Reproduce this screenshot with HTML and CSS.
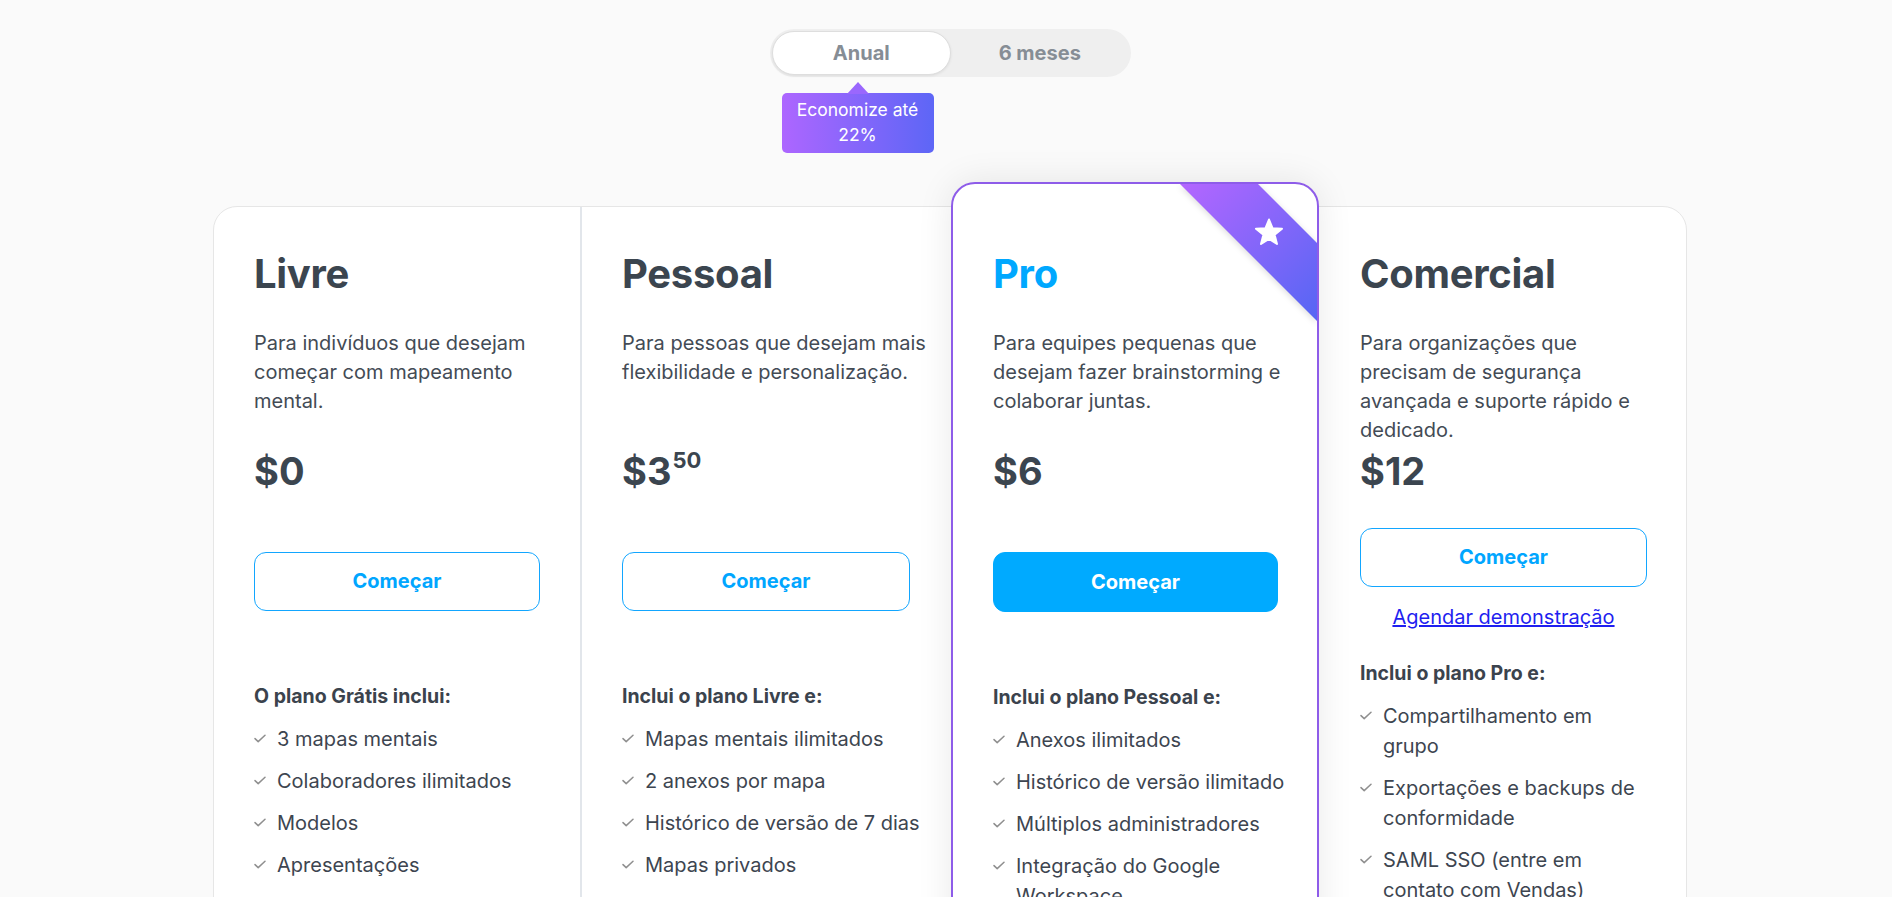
FILE: index.html
```html
<!DOCTYPE html>
<html lang="pt-BR">
<head>
<meta charset="utf-8">
<title>Planos</title>
<link rel="stylesheet" href="styles.css">
</head>
<body>
<div class="page">
  <div class="switch">
    <div class="toggle">
      <div class="opt opt-active">Anual</div>
      <div class="opt">6 meses</div>
    </div>
    <div class="tip">Economize até 22%</div>
  </div>

  <div class="plans">
    <section class="plan plan-free">
      <h2 class="plan-title">Livre</h2>
      <p class="plan-desc">Para indivíduos que desejam<br>começar com mapeamento<br>mental.</p>
      <div class="price-block"><div class="price">$0</div></div>
      <a class="btn">Começar</a>
      <div class="features">
        <h3 class="feat-head">O plano Grátis inclui:</h3>
        <ul class="feat-list">
          <li><svg class="chk" viewBox="0 0 12 9"><path d="M1 4.6 4.2 7.6 11 1.2"/></svg><span>3 mapas mentais</span></li>
          <li><svg class="chk" viewBox="0 0 12 9"><path d="M1 4.6 4.2 7.6 11 1.2"/></svg><span>Colaboradores ilimitados</span></li>
          <li><svg class="chk" viewBox="0 0 12 9"><path d="M1 4.6 4.2 7.6 11 1.2"/></svg><span>Modelos</span></li>
          <li><svg class="chk" viewBox="0 0 12 9"><path d="M1 4.6 4.2 7.6 11 1.2"/></svg><span>Apresentações</span></li>
        </ul>
      </div>
    </section>

    <section class="plan plan-personal">
      <h2 class="plan-title">Pessoal</h2>
      <p class="plan-desc">Para pessoas que desejam mais<br>flexibilidade e personalização.</p>
      <div class="price-block"><div class="price">$3<span class="cents">50</span></div></div>
      <a class="btn">Começar</a>
      <div class="features">
        <h3 class="feat-head">Inclui o plano Livre e:</h3>
        <ul class="feat-list">
          <li><svg class="chk" viewBox="0 0 12 9"><path d="M1 4.6 4.2 7.6 11 1.2"/></svg><span>Mapas mentais ilimitados</span></li>
          <li><svg class="chk" viewBox="0 0 12 9"><path d="M1 4.6 4.2 7.6 11 1.2"/></svg><span>2 anexos por mapa</span></li>
          <li><svg class="chk" viewBox="0 0 12 9"><path d="M1 4.6 4.2 7.6 11 1.2"/></svg><span>Histórico de versão de 7 dias</span></li>
          <li><svg class="chk" viewBox="0 0 12 9"><path d="M1 4.6 4.2 7.6 11 1.2"/></svg><span>Mapas privados</span></li>
        </ul>
      </div>
    </section>

    <section class="plan plan-pro">
      <svg class="ribbon" viewBox="0 0 137 137" aria-hidden="true">
        <defs>
          <linearGradient id="rg" x1="0" y1="0" x2="1" y2="1">
            <stop offset="0" stop-color="#b466ff"/>
            <stop offset="1" stop-color="#5566f4"/>
          </linearGradient>
        </defs>
        <polygon points="0,0 78,0 137,59 137,137" fill="url(#rg)"/>
        <path transform="translate(89 49)" d="M0 -13.5 3.5 -4.8 13 -4.3 5.6 1.8 8 11 0 5.9 -8 11 -5.6 1.8 -13 -4.3 -3.5 -4.8Z" fill="#fff" stroke="#fff" stroke-width="2" stroke-linejoin="round"/>
      </svg>
      <h2 class="plan-title title-pro">Pro</h2>
      <p class="plan-desc">Para equipes pequenas que<br>desejam fazer brainstorming e<br>colaborar juntas.</p>
      <div class="price-block"><div class="price">$6</div></div>
      <a class="btn btn-fill">Começar</a>
      <div class="features">
        <h3 class="feat-head">Inclui o plano Pessoal e:</h3>
        <ul class="feat-list">
          <li><svg class="chk" viewBox="0 0 12 9"><path d="M1 4.6 4.2 7.6 11 1.2"/></svg><span>Anexos ilimitados</span></li>
          <li><svg class="chk" viewBox="0 0 12 9"><path d="M1 4.6 4.2 7.6 11 1.2"/></svg><span>Histórico de versão ilimitado</span></li>
          <li><svg class="chk" viewBox="0 0 12 9"><path d="M1 4.6 4.2 7.6 11 1.2"/></svg><span>Múltiplos administradores</span></li>
          <li><svg class="chk" viewBox="0 0 12 9"><path d="M1 4.6 4.2 7.6 11 1.2"/></svg><span>Integração do Google<br>Workspace</span></li>
        </ul>
      </div>
    </section>

    <section class="plan plan-business">
      <h2 class="plan-title">Comercial</h2>
      <p class="plan-desc">Para organizações que<br>precisam de segurança<br>avançada e suporte rápido e<br>dedicado.</p>
      <div class="price-block price-block-short"><div class="price">$12</div></div>
      <a class="btn">Começar</a>
      <a class="demo-link" href="#">Agendar demonstração</a>
      <div class="features features-tight">
        <h3 class="feat-head">Inclui o plano Pro e:</h3>
        <ul class="feat-list">
          <li><svg class="chk" viewBox="0 0 12 9"><path d="M1 4.6 4.2 7.6 11 1.2"/></svg><span>Compartilhamento em<br>grupo</span></li>
          <li><svg class="chk" viewBox="0 0 12 9"><path d="M1 4.6 4.2 7.6 11 1.2"/></svg><span>Exportações e backups de<br>conformidade</span></li>
          <li><svg class="chk" viewBox="0 0 12 9"><path d="M1 4.6 4.2 7.6 11 1.2"/></svg><span>SAML SSO (entre em<br>contato com Vendas)</span></li>
        </ul>
      </div>
    </section>
  </div>
</div>
</body>
</html>
```

FILE: styles.css
```css
* { box-sizing: border-box; }

html, body {
  margin: 0;
  background: #fafafa;
  font-family: Inter, Lato, "Open Sans", Arial, sans-serif;
  color: #3d4650;
}

.page {
  padding: 29px 0 80px 8px;
}

/* toggle */
.switch {
  position: relative;
  width: 361px;
  margin: 0 auto;
}

.toggle {
  display: flex;
  height: 48px;
  padding: 2px;
  border-radius: 24px;
  background: #efefef;
}

.opt {
  flex: 1;
  display: flex;
  align-items: center;
  justify-content: center;
  font-size: 20px;
  font-weight: 700;
  color: #868d95;
  border-radius: 22px;
}

.opt-active {
  background: #fff;
  border: 1px solid #dedede;
  box-shadow: 0 1px 3px rgba(0, 0, 0, 0.08);
}

.tip {
  position: absolute;
  top: 64px;
  left: 12px;
  width: 152px;
  padding: 4px 8px 6px;
  border-radius: 5px;
  background: linear-gradient(90deg, #ad66ff 0%, #5d66f6 100%);
  color: #fff;
  font-size: 17.5px;
  line-height: 25px;
  text-align: center;
}

.tip::before {
  content: "";
  position: absolute;
  top: -11px;
  left: 65px;
  border-left: 11px solid transparent;
  border-right: 11px solid transparent;
  border-bottom: 12px solid #9a67fd;
}

/* plans */
.plans {
  display: grid;
  grid-template-columns: repeat(4, 1fr);
  width: 1474px;
  margin: 129px auto 0;
  background: #fff;
  border: 1px solid #e6e6e6;
  border-radius: 24px;
}

.plan {
  display: flex;
  flex-direction: column;
  padding: 41px 40px 60px;
  min-width: 0;
}

.plan-free {
  border-right: 2px solid #e2e6eb;
}

.plan-pro {
  position: relative;
  overflow: hidden;
  margin: -25px -1px -1px 1px;
  padding: 64px 39px 60px 40px;
  background: #fff;
  border: 2px solid #8e5ce9;
  border-radius: 24px;
  box-shadow: 0 0 36px rgba(0, 0, 0, 0.09);
}

.plan-business {
  padding-left: 42px;
  padding-right: 39px;
}

.ribbon {
  position: absolute;
  top: 0;
  right: 0;
  width: 137px;
  height: 137px;
  filter: drop-shadow(0 2px 3px rgba(0, 0, 0, 0.14));
}

.plan-title {
  margin: 0;
  font-size: 40px;
  line-height: 52px;
  font-weight: 700;
  letter-spacing: -0.3px;
  color: #3b454f;
}

.title-pro { color: #00a8ff; }

.plan-desc {
  margin: 28.5px -24px 0 0;
  min-height: 116px;
  font-size: 20px;
  line-height: 29px;
  color: #434b55;
}

.price-block {
  height: 107px;
}

.price-block-short {
  height: 83px;
}

.price {
  font-size: 38px;
  line-height: 52px;
  font-weight: 700;
  color: #3b454f;
}

.cents {
  display: inline-block;
  vertical-align: top;
  font-size: 22px;
  line-height: 30px;
  margin-left: 1px;
}

.btn {
  display: flex;
  align-items: center;
  justify-content: center;
  height: 59px;
  border: 1px solid #12a6ff;
  border-radius: 12px;
  color: #00a6ff;
  font-size: 20px;
  font-weight: 700;
  cursor: pointer;
}

.btn-fill {
  background: #00aaff;
  border-color: #00aaff;
  color: #fff;
  height: 60px;
}

.demo-link {
  margin-top: 16px;
  align-self: center;
  font-size: 20px;
  line-height: 29px;
  color: #1f1ff0;
  text-decoration: underline;
}

.features {
  margin-top: 71.5px;
}

.features-tight {
  margin-top: 27px;
}

.feat-head {
  margin: 0 0 13px;
  font-size: 19.5px;
  line-height: 29px;
  font-weight: 700;
  color: #3b434d;
}

.feat-list {
  list-style: none;
  margin: 0 -24px 0 0;
  padding: 0;
  display: flex;
  flex-direction: column;
  gap: 12px;
}

.feat-list li {
  display: flex;
  align-items: flex-start;
  font-size: 20px;
  line-height: 30px;
  color: #3d4550;
}

.chk {
  flex: none;
  width: 12px;
  height: 9px;
  margin: 10px 11px 0 0;
  fill: none;
  stroke: #8f8f8f;
  stroke-width: 1.5;
  stroke-linecap: round;
  stroke-linejoin: round;
}
```
